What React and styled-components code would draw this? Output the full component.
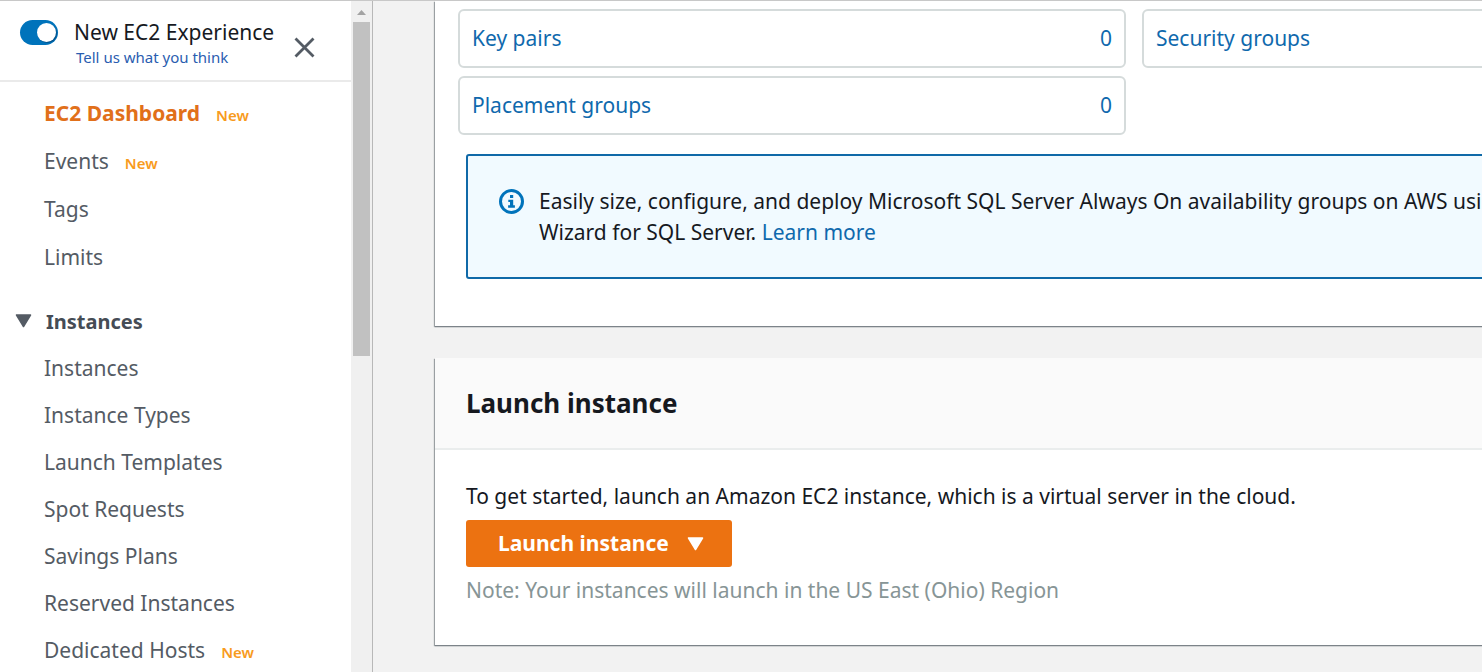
import React from "react";
import styled, { createGlobalStyle } from "styled-components";

const GlobalStyle = createGlobalStyle`
  *, *::before, *::after { box-sizing: border-box; }
  body {
    margin: 0;
    background: #f2f2f2;
    color: #16191f;
    font-family: "Noto Sans", "Open Sans", sans-serif;
    font-size: 21px;
    line-height: 31px;
  }
  a { color: #0f69ad; text-decoration: none; }
  p, h2, h3, ul { margin: 0; padding: 0; }
`;

const Shell = styled.div`
  display: flex;
  height: 100vh;
  overflow: hidden;
  border-top: 1px solid #c8c8c8;
`;

const Sidebar = styled.aside`
  display: flex;
  flex: none;
  width: 373px;
  background: #fff;
  border-right: 1px solid #b8b8b8;
`;

const SidebarContent = styled.div`
  flex: 1;
  min-width: 0;
`;

const ScrollTrack = styled.div`
  display: flex;
  flex-direction: column;
  align-items: center;
  width: 21px;
  background: #f0f0f0;
`;

const ScrollArrow = styled.svg`
  width: 17px;
  height: 21px;
`;

const ScrollThumb = styled.div`
  width: 17px;
  height: 334px;
  background: #c1c1c1;
`;

const Experience = styled.header`
  display: flex;
  height: 81px;
  padding: 19px 36px 0 20px;
  border-bottom: 2px solid #eaeaea;
`;

const Toggle = styled.input`
  appearance: none;
  display: flex;
  align-items: center;
  justify-content: flex-end;
  width: 38px;
  height: 25px;
  margin: 0 16px 0 0;
  padding: 0 2px;
  border-radius: 13px;
  background: #0073bb;
  &::before {
    content: "";
    width: 19px;
    height: 19px;
    border-radius: 50%;
    background: #fff;
    box-shadow: 1px 1px 1px #00508a;
  }
`;

const ExperienceText = styled.div`
  display: flex;
  flex: 1;
  flex-direction: column;
  white-space: nowrap;
`;

const ExperienceLabel = styled.label`
  line-height: 25px;
`;

const FeedbackLink = styled.a`
  padding-left: 2px;
  color: #2a5db0;
  font-size: 15px;
  line-height: 24px;
`;

const CloseButton = styled.button`
  width: 21px;
  height: 21px;
  margin-top: 17px;
  padding: 0;
  border: 0;
  background: none;
  svg { display: block; }
`;

const NavList = styled.ul`
  display: flex;
  flex-direction: column;
  gap: ${(p) => (p.$first ? "1px" : "0")};
  list-style: none;
  padding: ${(p) => (p.$first ? "8px" : "0")} 0 0 44px;
`;

const NavItem = styled.li`
  display: flex;
  align-items: center;
  gap: 16px;
  height: 47px;
  a {
    color: ${(p) => (p.$active ? "#e1701a" : "#545b64")};
    font-weight: ${(p) => (p.$active ? 700 : 400)};
  }
`;

const NewBadge = styled.span`
  padding-top: 4px;
  color: #f89b1d;
  font-size: 15px;
  font-weight: 600;
`;

const SectionHeading = styled.h3`
  display: flex;
  align-items: center;
  gap: 14px;
  height: 48px;
  margin-top: 16px;
  padding-left: 15px;
  color: #454c55;
  font-size: 20px;
  font-weight: 700;
`;

const Main = styled.main`
  flex: 1;
  min-width: 0;
  padding-left: 62px;
  overflow: hidden;
`;

const Card = styled.section`
  min-width: 1400px;
  margin-bottom: 32px;
  background: #fff;
  box-shadow: 0 1px 1px #7c8389, -1px 1px 1px #a0a5a8;
`;

const ResourceBody = styled.div`
  padding: 8px 25px 47px 23px;
`;

const ResourceGrid = styled.div`
  display: grid;
  grid-template-columns: 1fr 1fr;
  gap: 8px 16px;
`;

const ResourceTile = styled.a`
  display: flex;
  align-items: center;
  justify-content: space-between;
  height: 59px;
  padding: 0 12px;
  border: 2px solid #d5dbdb;
  border-radius: 6px;
`;

const Alert = styled.div`
  display: flex;
  gap: 15px;
  margin: 19px 8px 0;
  padding: 30px 31px 29px;
  border: 2px solid #0f69a8;
  border-radius: 3px;
  background: #f1faff;
`;

const InfoIcon = styled.svg`
  flex: none;
  width: 25px;
  height: 25px;
  margin-top: 3px;
`;

const CardHeader = styled.div`
  padding: 30px 31px 29px;
  border-bottom: 2px solid #eaeded;
  background: #fafafa;
`;

const CardTitle = styled.h2`
  font-size: 26px;
  font-weight: 700;
`;

const CardBody = styled.div`
  display: flex;
  flex-direction: column;
  align-items: flex-start;
  gap: 8px;
  padding: 31px 31px 39px;
`;

const LaunchButton = styled.button`
  display: flex;
  align-items: center;
  gap: 18px;
  height: 47px;
  padding: 0 28px 0 32px;
  border: 0;
  border-radius: 3px;
  background: #ec7211;
  color: #fff;
  font: inherit;
  font-weight: 700;
`;

const Note = styled.p`
  color: #879596;
`;

const Caret = ({ color }) => (
  <svg width="17" height="14" viewBox="0 0 17 14" aria-hidden="true">
    <path d="M1.5 1h14L8.5 12.5z" fill={color} stroke={color} strokeWidth="1.5" strokeLinejoin="round" />
  </svg>
);

const overview = [
  { label: "EC2 Dashboard", isNew: true, active: true },
  { label: "Events", isNew: true },
  { label: "Tags" },
  { label: "Limits" },
];

const instances = [
  { label: "Instances" },
  { label: "Instance Types" },
  { label: "Launch Templates" },
  { label: "Spot Requests" },
  { label: "Savings Plans" },
  { label: "Reserved Instances" },
  { label: "Dedicated Hosts", isNew: true },
];

const resources = [
  { label: "Key pairs", count: "0" },
  { label: "Security groups" },
  { label: "Placement groups", count: "0" },
];

const Nav = ({ items, first }) => (
  <NavList $first={first}>
    {items.map((item) => (
      <NavItem key={item.label} $active={item.active}>
        <a href="#">{item.label}</a>
        {item.isNew && <NewBadge>New</NewBadge>}
      </NavItem>
    ))}
  </NavList>
);

export default function App() {
  return (
    <>
      <GlobalStyle />
      <Shell>
        <Sidebar>
          <SidebarContent>
            <Experience>
              <Toggle id="experience" type="checkbox" role="switch" defaultChecked />
              <ExperienceText>
                <ExperienceLabel htmlFor="experience">New EC2 Experience</ExperienceLabel>
                <FeedbackLink href="#">Tell us what you think</FeedbackLink>
              </ExperienceText>
              <CloseButton aria-label="Close">
                <svg width="21" height="21" viewBox="0 0 21 21">
                  <path d="M1.5 1.5l18 18M19.5 1.5l-18 18" stroke="#545b64" strokeWidth="2.8" />
                </svg>
              </CloseButton>
            </Experience>
            <nav>
              <Nav items={overview} first />
              <SectionHeading>
                <Caret color="#545b64" />
                Instances
              </SectionHeading>
              <Nav items={instances} />
            </nav>
          </SidebarContent>
          <ScrollTrack>
            <ScrollArrow viewBox="0 0 17 21" aria-hidden="true">
              <path d="M4 14l4.500-5 4.500 5z" fill="#a3a3a3" />
            </ScrollArrow>
            <ScrollThumb />
          </ScrollTrack>
        </Sidebar>
        <Main>
          <Card>
            <ResourceBody>
              <ResourceGrid>
                {resources.map((resource) => (
                  <ResourceTile key={resource.label} href="#">
                    <span>{resource.label}</span>
                    <span>{resource.count}</span>
                  </ResourceTile>
                ))}
              </ResourceGrid>
              <Alert>
                <InfoIcon viewBox="0 0 25 25" aria-hidden="true">
                  <circle cx="12.5" cy="12.5" r="11" fill="none" stroke="#0073bb" strokeWidth="3" />
                  <path d="M11 6h3.200v3H11zM9.300 10.700h4.900v5.500h1.700v2.500H9.100v-2.500h1.900V13H9.300z" fill="#0073bb" />
                </InfoIcon>
                <p>
                  Easily size, configure, and deploy Microsoft SQL Server Always On availability groups on AWS using
                  <br />
                  Wizard for SQL Server. <a href="#">Learn more</a>
                </p>
              </Alert>
            </ResourceBody>
          </Card>
          <Card>
            <CardHeader>
              <CardTitle>Launch instance</CardTitle>
            </CardHeader>
            <CardBody>
              <p>To get started, launch an Amazon EC2 instance, which is a virtual server in the cloud.</p>
              <LaunchButton>
                Launch instance
                <Caret color="#fff" />
              </LaunchButton>
              <Note>Note: Your instances will launch in the US East (Ohio) Region</Note>
            </CardBody>
          </Card>
        </Main>
      </Shell>
    </>
  );
}
